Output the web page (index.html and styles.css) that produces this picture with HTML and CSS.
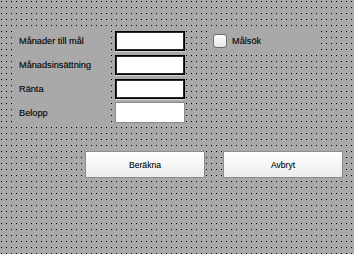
FILE: index.html
```html
<!DOCTYPE html>
<html lang="sv">
<head>
<meta charset="utf-8">
<title>Sparmål</title>
<link rel="stylesheet" href="styles.css">
</head>
<body>
<div class="panel">
  <div class="form">
    <div class="row">
      <div class="label">Månader till mål</div>
      <div class="input"></div>
      <div class="check-area"><span class="checkbox"></span><span class="check-text">Målsök</span></div>
    </div>
    <div class="row">
      <div class="label">Månadsinsättning</div>
      <div class="input"></div>
    </div>
    <div class="row">
      <div class="label">Ränta</div>
      <div class="input"></div>
    </div>
    <div class="row">
      <div class="label">Belopp</div>
      <div class="input disabled"></div>
    </div>
  </div>
  <div class="buttons">
    <div class="button">Beräkna</div>
    <div class="button">Avbryt</div>
  </div>
</div>
</body>
</html>
```

FILE: styles.css
```css
html, body {
  margin: 0;
  padding: 0;
}
body {
  width: 354px;
  height: 254px;
  overflow: hidden;
  background-color: #a9a9a9;
  background-image: conic-gradient(from 270deg at 1px 1px, #000 25%, transparent 0);
  background-size: 5px 6px;
  background-position: 1px 1px;
  font-family: "Liberation Sans", Arial, sans-serif;
  color: #111;
}
.panel {
  padding: 30px 0 0 13px;
}
.form {
  display: flex;
  flex-direction: column;
  gap: 4px;
}
.row {
  display: flex;
  align-items: center;
  height: 20px;
}
.label {
  width: 90px;
  height: 20px;
  margin-right: 6px;
  padding-left: 6px;
  background: #a9a9a9;
  font-size: 9.2px;
  line-height: 22px;
  white-space: nowrap;
  text-shadow: 0 0 0.3px rgba(0, 0, 0, 0.5);
}
.input {
  box-sizing: border-box;
  width: 70px;
  height: 20px;
  margin-top: 1px;
  background: #fff;
  border: 1px solid #000;
  box-shadow: inset 0 0 0 1px #2a2a2a, 0 1px 0 #d8d8d8;
}
.input.disabled {
  border: 1px solid #8a8a8a;
  box-shadow: none;
  height: 21px;
}
.check-area {
  display: flex;
  align-items: center;
  width: 104px;
  height: 20px;
  margin-left: 22px;
  padding-left: 6px;
  background: #a9a9a9;
}
.checkbox {
  box-sizing: border-box;
  width: 14px;
  height: 14px;
  margin-top: 2px;
  border: 1px solid #6e6e6e;
  border-radius: 3px;
  background: linear-gradient(#ffffff, #e4e4e4);
  margin-right: 5px;
}
.check-text {
  font-size: 9.2px;
  margin-top: 1px;
  text-shadow: 0 0 0.3px rgba(0, 0, 0, 0.5);
}
.buttons {
  display: flex;
  gap: 18px;
  margin-top: 29px;
  margin-left: 72px;
}
.button {
  box-sizing: border-box;
  width: 120px;
  height: 27px;
  border: 1px solid #8c8c8c;
  background: linear-gradient(#ffffff, #ececec);
  font-size: 8.6px;
  line-height: 26px;
  text-align: center;
  color: #111;
  text-shadow: 0 0 0.3px rgba(0, 0, 0, 0.4);
}
```
